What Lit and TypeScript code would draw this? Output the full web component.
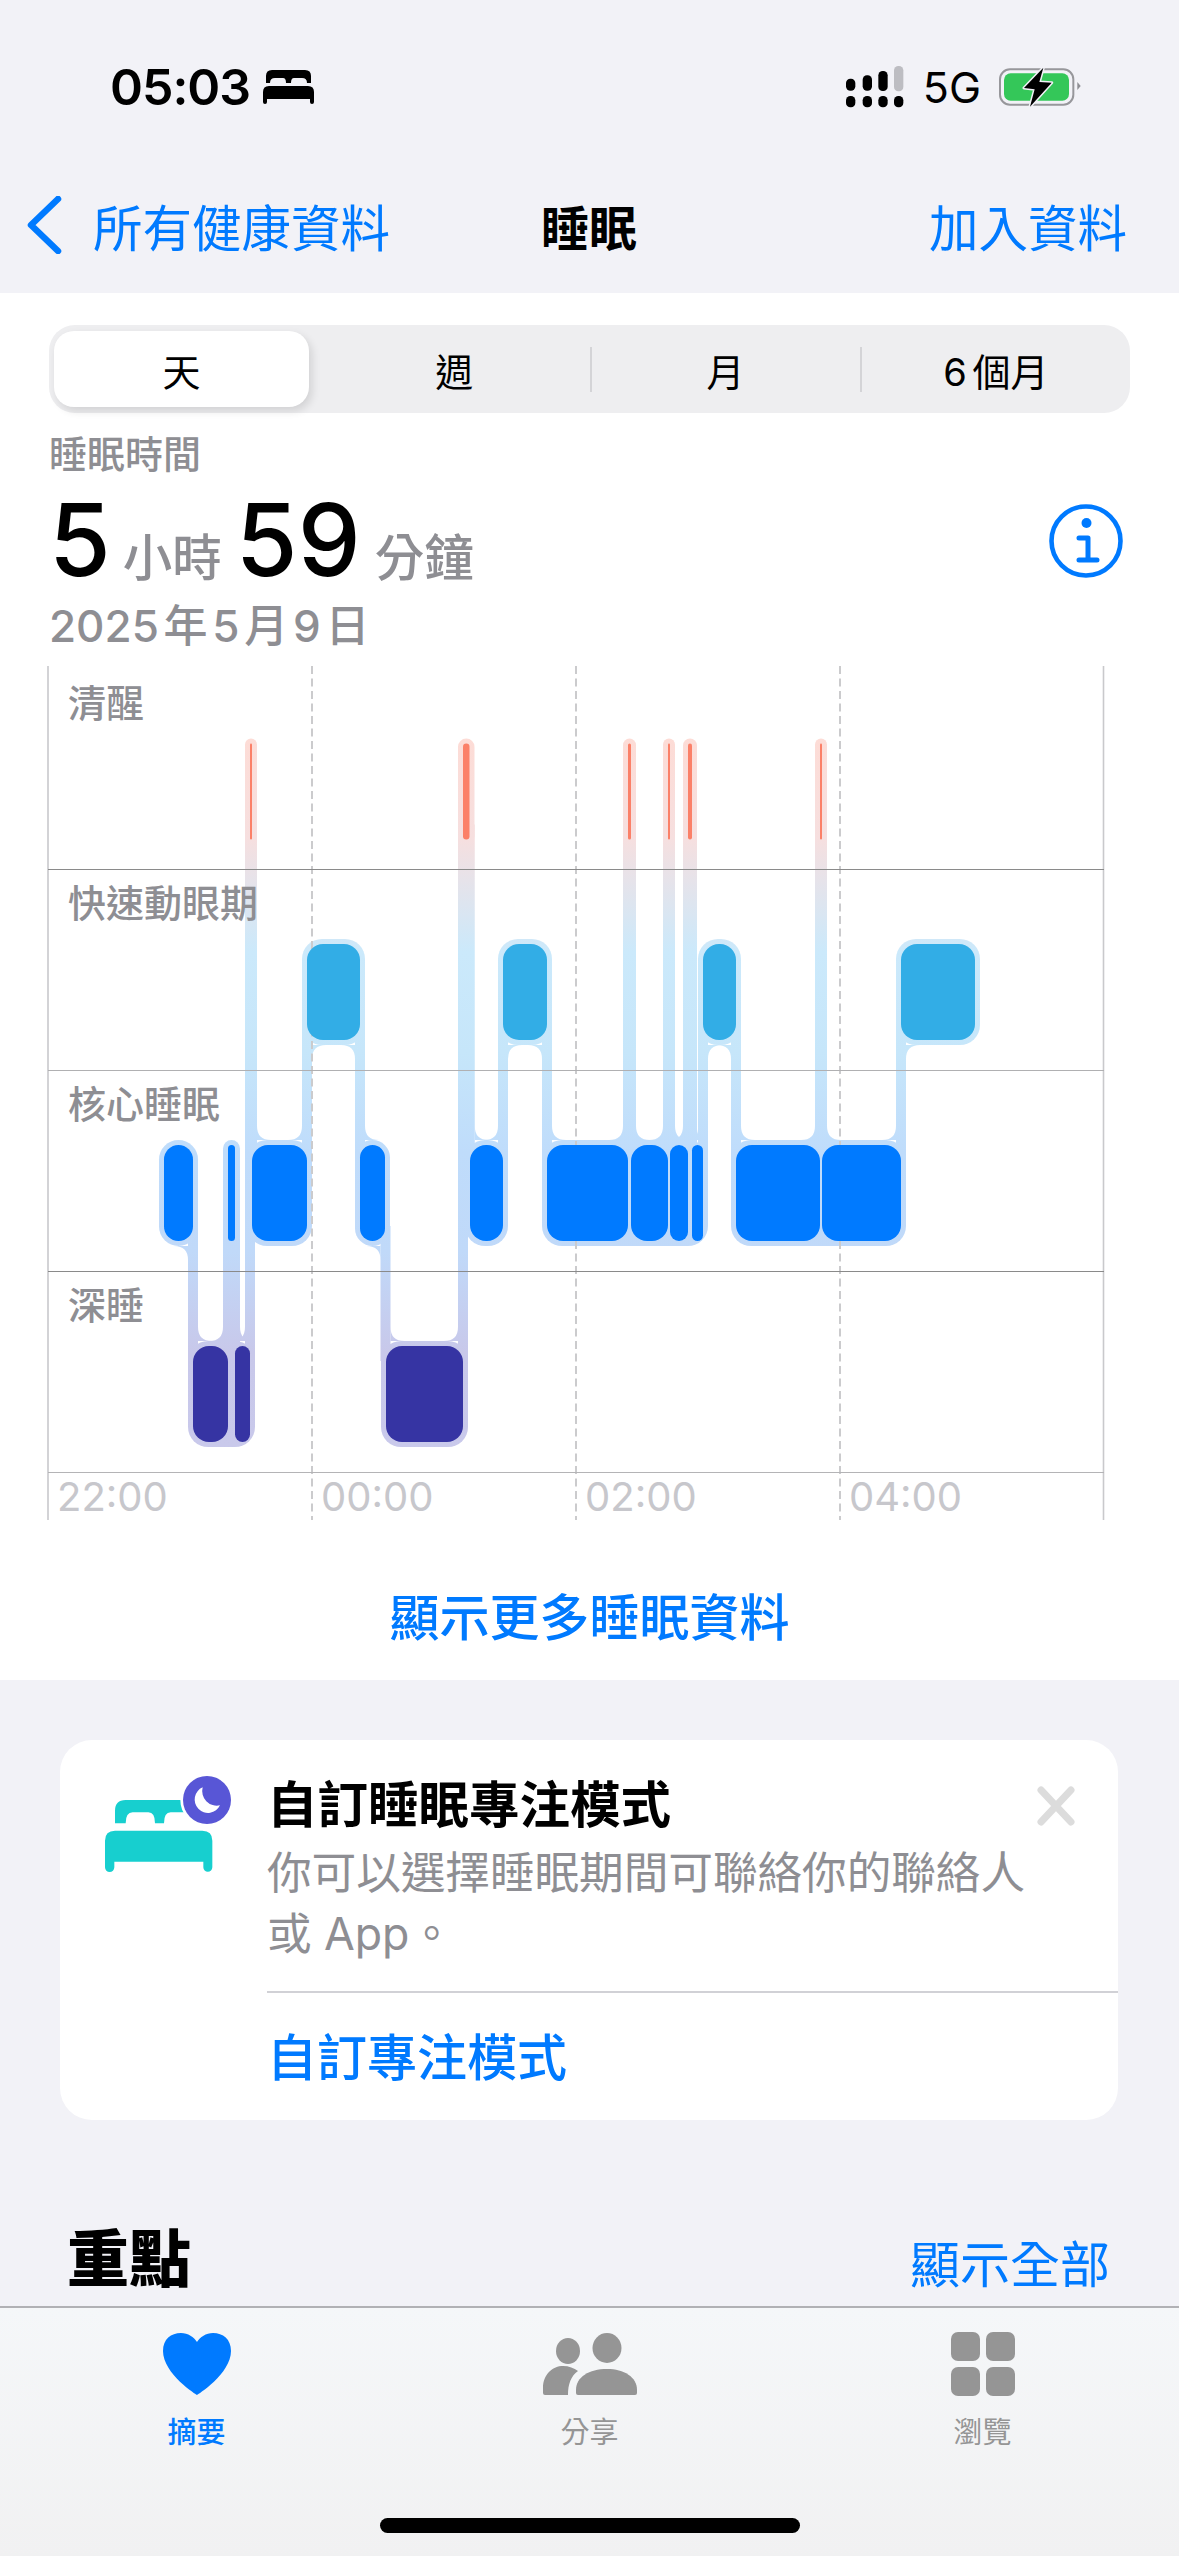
import { LitElement, html, svg, css } from "lit";
import { customElement } from "lit/decorators.js";

type Stage = "awake" | "rem" | "core" | "deep";

interface Seg {
  stage: Stage;
  x0: number;
  x1: number;
}

const ROW_TOP: Record<Stage, number> = { awake: 743.5, rem: 944, core: 1145, deep: 1346 };
const ROW_H = 96;
const HALO = 5;
const LINK = 10;

// chronological sleep stages, in chart x coordinates
const SEGS: Seg[] = [
  { stage: "core", x0: 164, x1: 193 },
  { stage: "deep", x0: 193, x1: 228 },
  { stage: "core", x0: 228, x1: 235 },
  { stage: "deep", x0: 235, x1: 250 },
  { stage: "awake", x0: 250, x1: 252 },
  { stage: "core", x0: 252, x1: 307 },
  { stage: "rem", x0: 307, x1: 360 },
  { stage: "core", x0: 360, x1: 385 },
  { stage: "deep", x0: 386, x1: 463 },
  { stage: "awake", x0: 463, x1: 469.5 },
  { stage: "core", x0: 470, x1: 503 },
  { stage: "rem", x0: 503, x1: 547 },
  { stage: "core", x0: 547, x1: 628 },
  { stage: "awake", x0: 628, x1: 631 },
  { stage: "core", x0: 631, x1: 668 },
  { stage: "awake", x0: 668, x1: 670 },
  { stage: "core", x0: 670, x1: 688 },
  { stage: "awake", x0: 688, x1: 692 },
  { stage: "core", x0: 692, x1: 703 },
  { stage: "rem", x0: 703, x1: 736 },
  { stage: "core", x0: 736, x1: 820 },
  { stage: "awake", x0: 820, x1: 822 },
  { stage: "core", x0: 822, x1: 901 },
  { stage: "rem", x0: 901, x1: 975 },
];

const RANGES = ["天", "週", "月", "6 個月"];
const ROW_LABELS = ["清醒", "快速動眼期", "核心睡眠", "深睡"];
const HOURS = ["22:00", "00:00", "02:00", "04:00"];

function fillet(x: number, y: number, r: number, dx: number, dy: number) {
  return svg`<path d="M${x + dx * r} ${y}Q${x} ${y} ${x} ${y + dy * r}L${x} ${y}Z" fill="url(#halo)" />`;
}

// halo runs: segments in one row that nearly touch share a single outline
function haloRuns() {
  const runs: Seg[] = [];
  const stages: Stage[] = ["awake", "rem", "core", "deep"];
  for (const stage of stages) {
    let cur: Seg | null = null;
    for (const s of SEGS.filter((s) => s.stage === stage)) {
      if (cur && s.x0 - cur.x1 < 8) {
        cur.x1 = s.x1;
      } else {
        cur = { ...s };
        runs.push(cur);
      }
    }
  }
  return runs;
}

function links() {
  const out: unknown[] = [];
  for (let i = 0; i < SEGS.length - 1; i++) {
    const a = SEGS[i];
    const b = SEGS[i + 1];
    const x = (a.x1 + b.x0) / 2;
    const aTop = ROW_TOP[a.stage];
    const bTop = ROW_TOP[b.stage];
    const up = aTop < bTop ? a : b;
    const low = aTop < bTop ? b : a;
    const upBottom = ROW_TOP[up.stage] + ROW_H + HALO;
    const lowTop = ROW_TOP[low.stage] - HALO;
    const upSide = up === a ? -1 : 1;
    const lowSide = low === a ? -1 : 1;
    const upR = Math.min(14, up.x1 - up.x0);
    const lowR = Math.min(14, low.x1 - low.x0);
    out.push(svg`<rect x=${x - LINK / 2} y=${upBottom - 20} width=${LINK} height=${lowTop - upBottom + 40} fill="url(#halo)" />`);
    out.push(fillet(x + (upSide * LINK) / 2, upBottom, upR, upSide, 1));
    out.push(fillet(x + (lowSide * LINK) / 2, lowTop, lowR, lowSide, -1));
  }
  return out;
}

function chart() {
  const grid = [
    { y: 869.5, c: "#8a8a8a" },
    { y: 1070.5, c: "#b0b0b2" },
    { y: 1271.5, c: "#8a8a8a" },
    { y: 1472.5, c: "#b4b4b6" },
  ];
  return html`<svg class="plot" viewBox="47 666 1058 854" width="1058" height="854">
    <defs>
      <linearGradient id="halo" gradientUnits="userSpaceOnUse" x1="0" y1="738" x2="0" y2="1452">
        <stop offset="0" stop-color="#fddcd6" />
        <stop offset="0.14" stop-color="#f6dfdf" />
        <stop offset="0.2" stop-color="#e6e3ea" />
        <stop offset="0.3" stop-color="#cbe9fb" />
        <stop offset="0.44" stop-color="#c6e6fa" />
        <stop offset="0.58" stop-color="#bfdcfb" />
        <stop offset="0.72" stop-color="#c0d9f9" />
        <stop offset="0.86" stop-color="#c8c8ea" />
        <stop offset="1" stop-color="#c9c9eb" />
      </linearGradient>
    </defs>
    ${haloRuns().map((s) => {
      const w = s.x1 - s.x0;
      return svg`<rect x=${s.x0 - HALO} y=${ROW_TOP[s.stage] - HALO} width=${w + HALO * 2} height=${ROW_H + HALO * 2}
        rx=${Math.min(w / 2, 15) + HALO} fill="url(#halo)" />`;
    })}
    ${links()}
    <path d="M48 666V1520M1103.5 666V1520" stroke="#c9c9cc" stroke-width="1.6" fill="none" />
    ${[312, 576, 840].map(
      (x) => svg`<path d=${`M${x} 666V1520`} stroke="#cbcbcd" stroke-width="2" stroke-dasharray="8 4.5" fill="none" />`
    )}
    ${grid.map((l) => svg`<path d=${`M48 ${l.y}H1104`} stroke=${l.c} stroke-width="1.2" fill="none" />`)}
    ${SEGS.map((s) => {
      const w = s.x1 - s.x0;
      return svg`<rect class=${s.stage} x=${s.x0} y=${ROW_TOP[s.stage]} width=${w} height=${ROW_H} rx=${Math.min(w / 2, 16)} />`;
    })}
  </svg>`;
}

@customElement("app-root")
class AppRoot extends LitElement {
  static override styles = css`
    :host {
      display: block;
      width: 1179px;
      height: 2556px;
      overflow: hidden;
      background: #f2f2f7;
      font-family: Inter, "Noto Sans CJK TC", sans-serif;
      color: #000;
    }
    .screen {
      display: flex;
      flex-direction: column;
      height: 2556px;
    }
    .header {
      height: 293px;
      flex: none;
      padding-top: 60px;
      box-sizing: border-box;
    }
    .status {
      height: 54px;
      display: flex;
      align-items: center;
      padding-left: 110px;
    }
    .clock {
      font-size: 50px;
      font-weight: 600;
      letter-spacing: -1px;
      line-height: 54px;
    }
    .status-bed {
      margin-left: 13px;
    }
    .status-right {
      margin-left: auto;
      display: flex;
      align-items: center;
      margin-right: 98px;
    }
    .five-g {
      font-size: 43px;
      line-height: 54px;
      margin: 0 18px 0 19px;
    }
    .nav {
      margin-top: 61px;
      height: 100px;
      display: grid;
      grid-template-columns: 514px auto 1fr;
      align-items: center;
      padding: 0 52px 0 27px;
      font-size: 49.5px;
      color: #007aff;
    }
    .back {
      display: flex;
      align-items: center;
      gap: 31px;
      white-space: nowrap;
    }
    .nav-title {
      color: #000;
      font-weight: 700;
      font-size: 48px;
    }
    .add {
      text-align: right;
    }
    .sheet {
      background: #fff;
      height: 1387px;
      flex: none;
      padding-top: 32px;
      box-sizing: border-box;
    }
    .segments {
      margin: 0 49px;
      height: 88px;
      background: #eeeef0;
      border-radius: 26px;
      display: grid;
      grid-template-columns: repeat(4, 1fr);
      align-items: center;
      font-size: 38px;
    }
    .cell {
      display: flex;
      align-items: center;
      justify-content: center;
      height: 45px;
      word-spacing: -5px;
      white-space: pre;
    }
    .cell.ruled {
      border-left: 2px solid #d4d4d7;
    }
    .cell.on {
      height: 76px;
      margin: 0 10px 0 5px;
      background: #fff;
      border-radius: 20px;
      box-shadow: 3px 4px 8px rgba(0, 0, 0, 0.12);
    }
    .summary {
      padding: 19px 56px 0 49px;
      color: #8e8e93;
    }
    .caption {
      font-size: 38px;
      line-height: 44px;
      font-weight: 500;
    }
    .total {
      display: flex;
      align-items: center;
      justify-content: space-between;
      height: 108px;
      margin-top: 10px;
    }
    .info {
      margin-top: 2px;
    }
    .amount {
      display: flex;
      align-items: baseline;
      font-size: 49.5px;
      font-weight: 500;
    }
    .num {
      font-size: 100px;
      line-height: 108px;
      color: #000;
      font-weight: 500;
    }
    .unit {
      margin: 0 14px 0 12px;
    }
    .unit.last {
      margin-left: 14px;
    }
    .date {
      font-size: 44px;
      line-height: 50px;
      font-weight: 500;
      word-spacing: -7px;
      margin-top: 7px;
    }
    .chart {
      position: relative;
      margin-top: 15px;
      height: 854px;
    }
    .plot {
      position: absolute;
      left: 47px;
      top: 0;
      display: block;
    }
    .awake {
      fill: #fb8068;
    }
    .rem {
      fill: #32ade6;
    }
    .core {
      fill: #007aff;
    }
    .deep {
      fill: #3634a3;
    }
    .rows {
      position: absolute;
      left: 68px;
      top: 0;
      display: grid;
      grid-template-rows: 203px 201px 201px 202px;
      font-size: 38px;
      line-height: 68px;
      color: #8e8e93;
      font-weight: 500;
    }
    .rows div:first-child {
      padding-top: 3px;
    }
    .hours {
      position: absolute;
      left: 48px;
      top: 807px;
      display: grid;
      grid-template-columns: repeat(4, 264px);
      font-size: 40px;
      line-height: 47px;
      color: #c7c7cc;
      padding-left: 9px;
    }
    .more {
      text-align: center;
      font-size: 50px;
      line-height: 60px;
      color: #007aff;
      font-weight: 500;
      margin-top: 68px;
    }
    .scroll {
      flex: 1;
      overflow: hidden;
      padding-top: 60px;
      box-sizing: border-box;
    }
    .card {
      position: relative;
      margin: 0 61px 0 60px;
      height: 380px;
      background: #fff;
      border-radius: 32px;
      display: flex;
    }
    .card-icon {
      width: 207px;
      flex: none;
    }
    .card-icon svg {
      display: block;
      margin: 20px 0 0 20px;
    }
    .card-body {
      flex: 1;
      padding-top: 35px;
    }
    .card-title {
      font-size: 50.5px;
      line-height: 60px;
      font-weight: 700;
    }
    .card-text {
      font-size: 44.7px;
      line-height: 61px;
      color: #8e8e93;
      margin-top: 8px;
      white-space: nowrap;
      letter-spacing: -0.1px;
    }
    .card-link {
      margin-top: 26px;
      border-top: 2px solid #d1d1d6;
      padding: 35px 0 0 0;
      font-size: 50px;
      line-height: 60px;
      font-weight: 500;
      color: #007aff;
    }
    .close {
      position: absolute;
      left: 975px;
      top: 44px;
    }
    .heading {
      display: flex;
      justify-content: space-between;
      align-items: center;
      margin-top: 105px;
      height: 60px;
      padding: 0 69px 0 67px;
    }
    .heading b {
      font-size: 62px;
      font-weight: 900;
    }
    .heading span {
      font-size: 50px;
      color: #007aff;
      padding-top: 11px;
    }
    .tabbar {
      height: 250px;
      flex: none;
      box-sizing: border-box;
      border-top: 2px solid #b1b1b5;
      background: linear-gradient(#f5f7f9, #f1f1f2);
      padding-top: 24px;
    }
    .tabs {
      display: grid;
      grid-template-columns: 393px 393px 393px;
    }
    .tab {
      display: flex;
      flex-direction: column;
      align-items: center;
      color: #959595;
      font-size: 29px;
      line-height: 36px;
    }
    .tab.on {
      color: #007aff;
      font-weight: 500;
    }
    .tab svg {
      display: block;
      height: 64px;
      margin-bottom: 19px;
    }
    .home {
      width: 420px;
      height: 15px;
      border-radius: 8px;
      background: #000;
      margin: 67px auto 0;
    }
  `;

  override render() {
    return html`<div class="screen">
      <div class="header">
        <div class="status">
          <span class="clock">05:03</span>
          <svg class="status-bed" width="51" height="34" viewBox="0 0 51 34">
            <path d="M3 13V6Q3 0 9 0H42Q48 0 48 6V13H44Q44 8 39 8H31Q28 8 28 13H23Q23 8 20 8H12Q7 8 7 13Z" />
            <path d="M0 22Q0 16 6 16H45Q51 16 51 22V32a2 2 0 0 1-4 0V29H4V32a2 2 0 0 1-4 0Z" />
          </svg>
          <div class="status-right">
            <svg width="58" height="42" viewBox="138 50 174 126">
              <rect x="138" y="88" width="28" height="36" rx="13" />
              <rect x="188" y="78" width="28" height="46" rx="13" />
              <rect x="235" y="65" width="28" height="60" rx="13" />
              <rect x="282" y="50" width="28" height="76" rx="13" fill="#bdbdc2" />
              <rect x="138" y="140" width="28" height="34" rx="13" />
              <rect x="188" y="140" width="28" height="34" rx="13" />
              <rect x="235" y="140" width="28" height="34" rx="13" />
              <rect x="282" y="140" width="28" height="34" rx="13" />
            </svg>
            <span class="five-g">5G</span>
            <svg width="82" height="42" viewBox="597 50 246 126">
              <rect x="600" y="60" width="220" height="106" rx="30" fill="none" stroke="#97979b" stroke-width="6" />
              <rect x="612" y="72" width="195" height="82" rx="20" fill="#34c759" />
              <path d="M832 98L842 110L832 122Z" fill="#8e8e93" />
              <path
                d="M730 55L672 116L704 120L690 172L755 100L718 98Z"
                stroke="#f2f2f7"
                stroke-width="9"
                paint-order="stroke"
                stroke-linejoin="round"
              />
            </svg>
          </div>
        </div>
        <div class="nav">
          <div class="back">
            <svg width="35" height="58" viewBox="0 0 35 58">
              <path d="M31 3L4 29L31 55" fill="none" stroke="#007aff" stroke-width="6.5" stroke-linecap="round" stroke-linejoin="round" />
            </svg>
            <span>所有健康資料</span>
          </div>
          <div class="nav-title">睡眠</div>
          <div class="add">加入資料</div>
        </div>
      </div>

      <div class="sheet">
        <div class="segments">
          ${RANGES.map(
            (t, i) => html`<div class="cell ${i === 0 ? "on" : ""} ${i > 1 ? "ruled" : ""}">${t}</div>`
          )}
        </div>
        <div class="summary">
          <div class="caption">睡眠時間</div>
          <div class="total">
            <div class="amount">
              <span class="num">5</span><span class="unit">小時</span>
              <span class="num">59</span><span class="unit last">分鐘</span>
            </div>
            <svg class="info" width="74" height="74" viewBox="0 0 74 74">
              <circle cx="37" cy="37" r="34.5" fill="none" stroke="#007aff" stroke-width="4.6" />
              <circle cx="37.5" cy="19" r="5" fill="#007aff" />
              <path d="M30 34H39V56M30 56H48" fill="none" stroke="#007aff" stroke-width="5" stroke-linecap="round" stroke-linejoin="round" />
            </svg>
          </div>
          <div class="date">2025 年 5 月 9 日</div>
        </div>
        <div class="chart">
          ${chart()}
          <div class="rows">${ROW_LABELS.map((t) => html`<div>${t}</div>`)}</div>
          <div class="hours">${HOURS.map((t) => html`<span>${t}</span>`)}</div>
        </div>
        <div class="more">顯示更多睡眠資料</div>
      </div>

      <div class="scroll">
        <div class="card">
          <div class="card-icon">
            <svg width="180" height="130" viewBox="0 0 540 390">
              <path
                fill="#17cfcf"
                d="M105 190V152Q105 120 137 120H330V157H272Q252 157 252 190H225Q225 157 205 157H158Q137 157 137 190Z"
              />
              <path
                fill="#17cfcf"
                d="M75 242Q75 212 105 212H367Q397 212 397 242V322a13 13 0 0 1-27 0V305H103V322a13 13 0 0 1-28 0Z"
              />
              <circle cx="381" cy="120" r="72" fill="#5856d6" stroke="#fff" stroke-width="16" paint-order="stroke" />
              <path fill="#fff" d="M368 82A40 40 0 1 0 420 136A44 44 0 0 1 368 82Z" />
            </svg>
          </div>
          <div class="card-body">
            <div class="card-title">自訂睡眠專注模式</div>
            <div class="card-text">
              <div>你可以選擇睡眠期間可聯絡你的聯絡人</div>
              <div>或 App。</div>
            </div>
            <div class="card-link">自訂專注模式</div>
          </div>
          <svg class="close" width="42" height="44" viewBox="0 0 42 44">
            <path d="M6 6L36 38M36 6L6 38" stroke="#dcdcdc" stroke-width="7" stroke-linecap="round" fill="none" />
          </svg>
        </div>
        <div class="heading"><b>重點</b><span>顯示全部</span></div>
      </div>

      <div class="tabbar">
        <div class="tabs">
          <div class="tab on">
            <svg width="68" viewBox="0 0 68 64">
              <path
                fill="#007aff"
                d="M34 63C34 63 0 42 0 19C0 7 8 1 18 1C25 1 31 5 34 10C37 5 43 1 50 1C60 1 68 7 68 19C68 42 34 63 34 63Z"
              />
            </svg>
            <span>摘要</span>
          </div>
          <div class="tab">
            <svg width="94" viewBox="0 0 94 64">
              <g fill="#959595">
                <ellipse cx="25" cy="19" rx="12" ry="13" />
                <ellipse cx="64" cy="16" rx="14.5" ry="15" />
                <path d="M0 61V56C0 42 10 34 20 34C26 34 31 36 35 39C28 44 25 52 25 63H2Q0 63 0 61Z" />
                <path d="M35 63Q33 63 33 61V58C33 45 46 37 64 37C81 37 94 45 94 58V61Q94 63 92 63Z" />
              </g>
            </svg>
            <span>分享</span>
          </div>
          <div class="tab">
            <svg width="64" viewBox="0 0 64 64">
              <g fill="#959595">
                <rect x="0" y="0" width="29" height="29" rx="7" />
                <rect x="35" y="0" width="29" height="29" rx="7" />
                <rect x="0" y="35" width="29" height="29" rx="7" />
                <rect x="35" y="35" width="29" height="29" rx="7" />
              </g>
            </svg>
            <span>瀏覽</span>
          </div>
        </div>
        <div class="home"></div>
      </div>
    </div>`;
  }
}
